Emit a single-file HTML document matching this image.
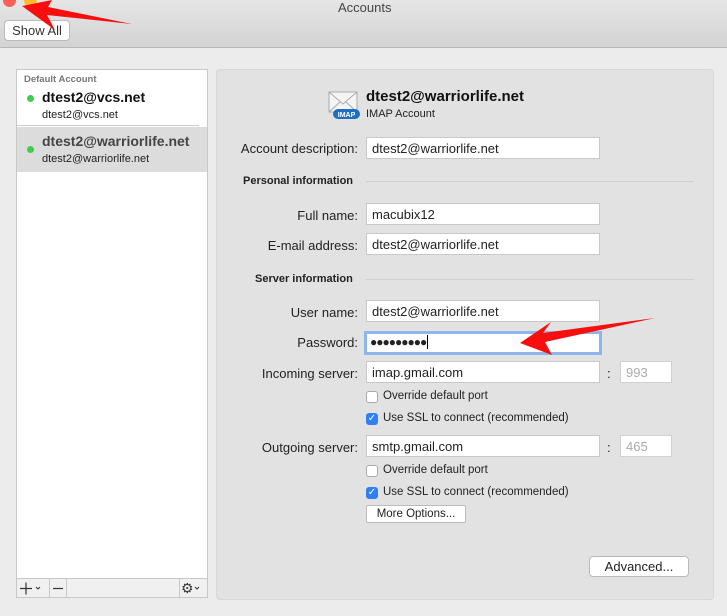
<!DOCTYPE html>
<html><head><style>
*{box-sizing:border-box;margin:0;padding:0}
body{width:727px;height:616px;background:#ececec;font-family:"Liberation Sans",sans-serif;font-size:13px;color:#222;position:relative;overflow:hidden}
.abs{position:absolute}
.tb{left:0;top:0;width:727px;height:48px;background:linear-gradient(#e6e6e6,#d3d3d3);border-bottom:1px solid #b8b8b8}
.lbl{right:369px;text-align:right;white-space:nowrap}
.inp{left:366px;width:234px;height:22px;background:#fff;border:1px solid #c8c8c8;padding:3px 5px;font-size:13px}
.sec{font-weight:bold;font-size:11px}
.line{height:1px;background:#cfcfcf}
.cb{left:366px;width:12px;height:12px;border:1px solid #aaa;border-radius:3px;background:#fff}
.cb.on{background:#2f7ff5;border-color:#2f7ff5;color:#fff;font-size:10px;line-height:10px;text-align:center}
.ct{left:383px;font-size:11.5px}
.btn{background:#fff;border:1px solid #bbb;border-radius:4px;text-align:center}
</style></head><body>
<div class="abs tb"></div>
<div class="abs" style="left:3px;top:-6px;width:13px;height:13px;border-radius:50%;background:#fc5f57"></div>
<div class="abs" style="left:24px;top:-6px;width:13px;height:13px;border-radius:50%;background:#fdbc2e"></div>
<div class="abs" style="left:338px;top:0;font-size:13px;color:#444">Accounts</div>
<div class="abs btn" style="left:4px;top:20px;width:66px;height:21px;font-size:13px;line-height:19px;color:#333">Show All</div>

<div class="abs" style="left:16px;top:69px;width:192px;height:528px;background:#fff;border:1px solid #c8c8c8"></div>
<div class="abs" style="left:24px;top:74px;font-size:9.5px;font-weight:bold;color:#777">Default Account</div>
<div class="abs" style="left:27px;top:95px;width:7px;height:7px;border-radius:50%;background:#3fce4a"></div>
<div class="abs" style="left:42px;top:89px;font-size:14px;font-weight:bold;color:#111">dtest2@vcs.net</div>
<div class="abs" style="left:42px;top:109px;font-size:11px">dtest2@vcs.net</div>
<div class="abs" style="left:17px;top:125px;width:182px;height:1px;background:#ccc"></div>
<div class="abs" style="left:17px;top:127px;width:190px;height:45px;background:#dcdcdc"></div>
<div class="abs" style="left:27px;top:146px;width:7px;height:7px;border-radius:50%;background:#3fce4a"></div>
<div class="abs" style="left:42px;top:133px;font-size:14px;font-weight:bold;color:#444">dtest2@warriorlife.net</div>
<div class="abs" style="left:42px;top:153px;font-size:11px">dtest2@warriorlife.net</div>
<div class="abs" style="left:16px;top:578px;width:192px;height:20px;background:#f0f0f0;border:1px solid #c8c8c8"></div>
<div class="abs" style="left:49px;top:578px;width:1px;height:20px;background:#c8c8c8"></div>
<div class="abs" style="left:66px;top:578px;width:1px;height:20px;background:#c8c8c8"></div>
<div class="abs" style="left:179px;top:578px;width:1px;height:20px;background:#c8c8c8"></div>
<svg class="abs" style="left:16px;top:578px" width="192" height="20">
<path d="M4 10.5h12M10 4.5v12" stroke="#333" stroke-width="1.2"/><path d="M20 9l2 2 2-2" stroke="#333" fill="none"/>
<path d="M37 10.5h10" stroke="#333" stroke-width="1.2"/>
<path d="M179 9l2 2 2-2" stroke="#333" fill="none"/>
</svg>
<div class="abs" style="left:181px;top:579px;font-size:14px;line-height:18px;color:#333">⚙</div>

<div class="abs" style="left:216px;top:69px;width:498px;height:531px;background:#e2e2e2;border-radius:4px;border:1px solid #d8d8d8"></div>
<svg class="abs" style="left:326px;top:88px" width="36" height="34"><path d="M3 4h28v20H3z" fill="#f4f4f4" stroke="#aaa"/><path d="M3 4l14 12 14-12M3 24l11-10M31 24l-11-10" fill="none" stroke="#aaa"/><rect x="7" y="21" width="27" height="10" rx="5" fill="#1e6fbf"/><text x="20.5" y="29" font-size="7" fill="#fff" font-weight="bold" text-anchor="middle" font-family="Liberation Sans">IMAP</text></svg>
<div class="abs" style="left:366px;top:88px;font-size:15px;font-weight:bold;color:#111">dtest2@warriorlife.net</div>
<div class="abs" style="left:366px;top:108px;font-size:11px">IMAP Account</div>

<div class="abs lbl" style="top:141px">Account description:</div>
<div class="abs inp" style="top:137px">dtest2@warriorlife.net</div>
<div class="abs sec" style="left:243px;top:175px">Personal information</div>
<div class="abs line" style="left:366px;top:181px;width:328px"></div>
<div class="abs lbl" style="top:208px">Full name:</div>
<div class="abs inp" style="top:203px">macubix12</div>
<div class="abs lbl" style="top:238px">E-mail address:</div>
<div class="abs inp" style="top:233px">dtest2@warriorlife.net</div>
<div class="abs sec" style="left:255px;top:273px">Server information</div>
<div class="abs line" style="left:366px;top:279px;width:328px"></div>
<div class="abs lbl" style="top:305px">User name:</div>
<div class="abs inp" style="top:300px">dtest2@warriorlife.net</div>
<div class="abs lbl" style="top:335px">Password:</div>
<div class="abs inp" style="top:331px;border:3px solid #8fb6ea;padding:1px 3px;font-size:12px;letter-spacing:-1px;left:364px;width:238px;height:24px">●●●●●●●●●<span style="border-left:1px solid #000;margin-left:1px"></span></div>
<div class="abs lbl" style="top:366px">Incoming server:</div>
<div class="abs inp" style="top:361px">imap.gmail.com</div>
<div class="abs" style="left:607px;top:366px">:</div>
<div class="abs inp" style="left:620px;width:52px;top:361px;color:#aaa;border-color:#d0d0d0">993</div>
<div class="abs cb" style="top:391px"></div><div class="abs ct" style="top:390px">Override default port</div>
<div class="abs cb on" style="top:413px">✓</div><div class="abs ct" style="top:412px">Use SSL to connect (recommended)</div>
<div class="abs lbl" style="top:440px">Outgoing server:</div>
<div class="abs inp" style="top:435px">smtp.gmail.com</div>
<div class="abs" style="left:607px;top:440px">:</div>
<div class="abs inp" style="left:620px;width:52px;top:435px;color:#aaa;border-color:#d0d0d0">465</div>
<div class="abs cb" style="top:465px"></div><div class="abs ct" style="top:464px">Override default port</div>
<div class="abs cb on" style="top:487px">✓</div><div class="abs ct" style="top:486px">Use SSL to connect (recommended)</div>
<div class="abs btn" style="left:366px;top:505px;width:100px;height:18px;border-radius:2px;font-size:11.5px;line-height:16px">More Options...</div>
<div class="abs btn" style="left:589px;top:556px;width:100px;height:21px;font-size:13px;line-height:19px">Advanced...</div>

<svg class="abs" style="left:0;top:0" width="727" height="616">
<polygon points="22,6 52,0 48,7 132,24 47,15 55,30" fill="#f70f0f"/>
<polygon points="520,343 551,322 543,333 655,318 545,342 552,355" fill="#f70f0f"/>
</svg>
</body></html>
